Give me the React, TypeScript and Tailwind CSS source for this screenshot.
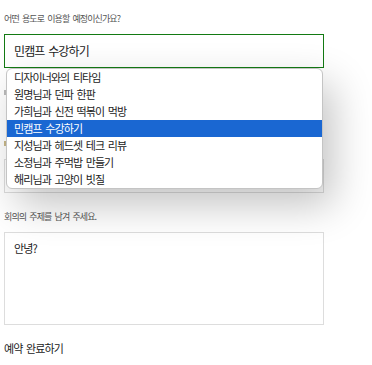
import React from "react";

const items = [
  "디자이너와의 티타임",
  "원명님과 던파 한판",
  "가희님과 신전 떡볶이 먹방",
  "민캠프 수강하기",
  "지성님과 헤드셋 테크 리뷰",
  "소정님과 주먹밥 만들기",
  "해리님과 고양이 빗질",
];

const font = { fontFamily: '"Noto Sans CJK KR", "Noto Sans", sans-serif' };

export default function App() {
  return (
    <div className="w-[372px] h-[365px] bg-white overflow-hidden [word-spacing:2px]" style={font}>
      <div className="ml-1 w-[320px] pt-[13px] flex flex-col">
        <div className="h-[12px] leading-[12px] text-[9px] tracking-[-0.9px] text-[#555]">
          어떤 용도로 이용할 예정이신가요?
        </div>
        <div className="relative mt-[9px] z-10">
          <div className="h-[34px] border border-[#137a13] flex items-center pl-[9px] text-[12px] tracking-[-0.9px] text-[#222]">
            민캠프 수강하기
          </div>
          <div className="absolute top-full left-[2px] right-[1px] bg-white border border-[#c4c4c4] rounded-[6px] overflow-hidden shadow-[10px_16px_40px_rgba(0,0,0,0.24)]">
            {items.map((t, i) => (
              <div
                key={t}
                className={
                  i === 3
                    ? "h-[17px] flex items-center pl-[7px] text-[11px] tracking-[-0.9px] bg-[#1a67d2] text-white"
                    : "h-[17px] flex items-center pl-[7px] text-[11px] tracking-[-0.9px] text-[#222]"
                }
              >
                {t}
              </div>
            ))}
          </div>
        </div>
        <div className="mt-[18px] h-[12px] flex items-center">
          <div className="w-[2px] h-[5px] bg-[#bbb]" />
        </div>
        <div className="h-[39px]" />
        <div className="h-[12px] flex items-center">
          <div className="w-[2px] h-[5px] bg-[#c9b98a]" />
        </div>
        <div className="mt-[10px] h-[34px] border border-[#ddd]" />
        <div className="mt-[18px] h-[12px] leading-[12px] text-[9px] tracking-[-0.9px] text-[#555]">
          회의의 주제를 남겨 주세요.
        </div>
        <div className="mt-[9px] h-[93px] border border-[#ddd] pl-[9px] pt-[8px] text-[11px] leading-[14px] tracking-[-0.9px] text-[#222]">
          안녕?
        </div>
        <div className="mt-[16px] text-[11px] leading-[14px] tracking-[-0.9px] text-[#222]">
          예약 완료하기
        </div>
      </div>
    </div>
  );
}
